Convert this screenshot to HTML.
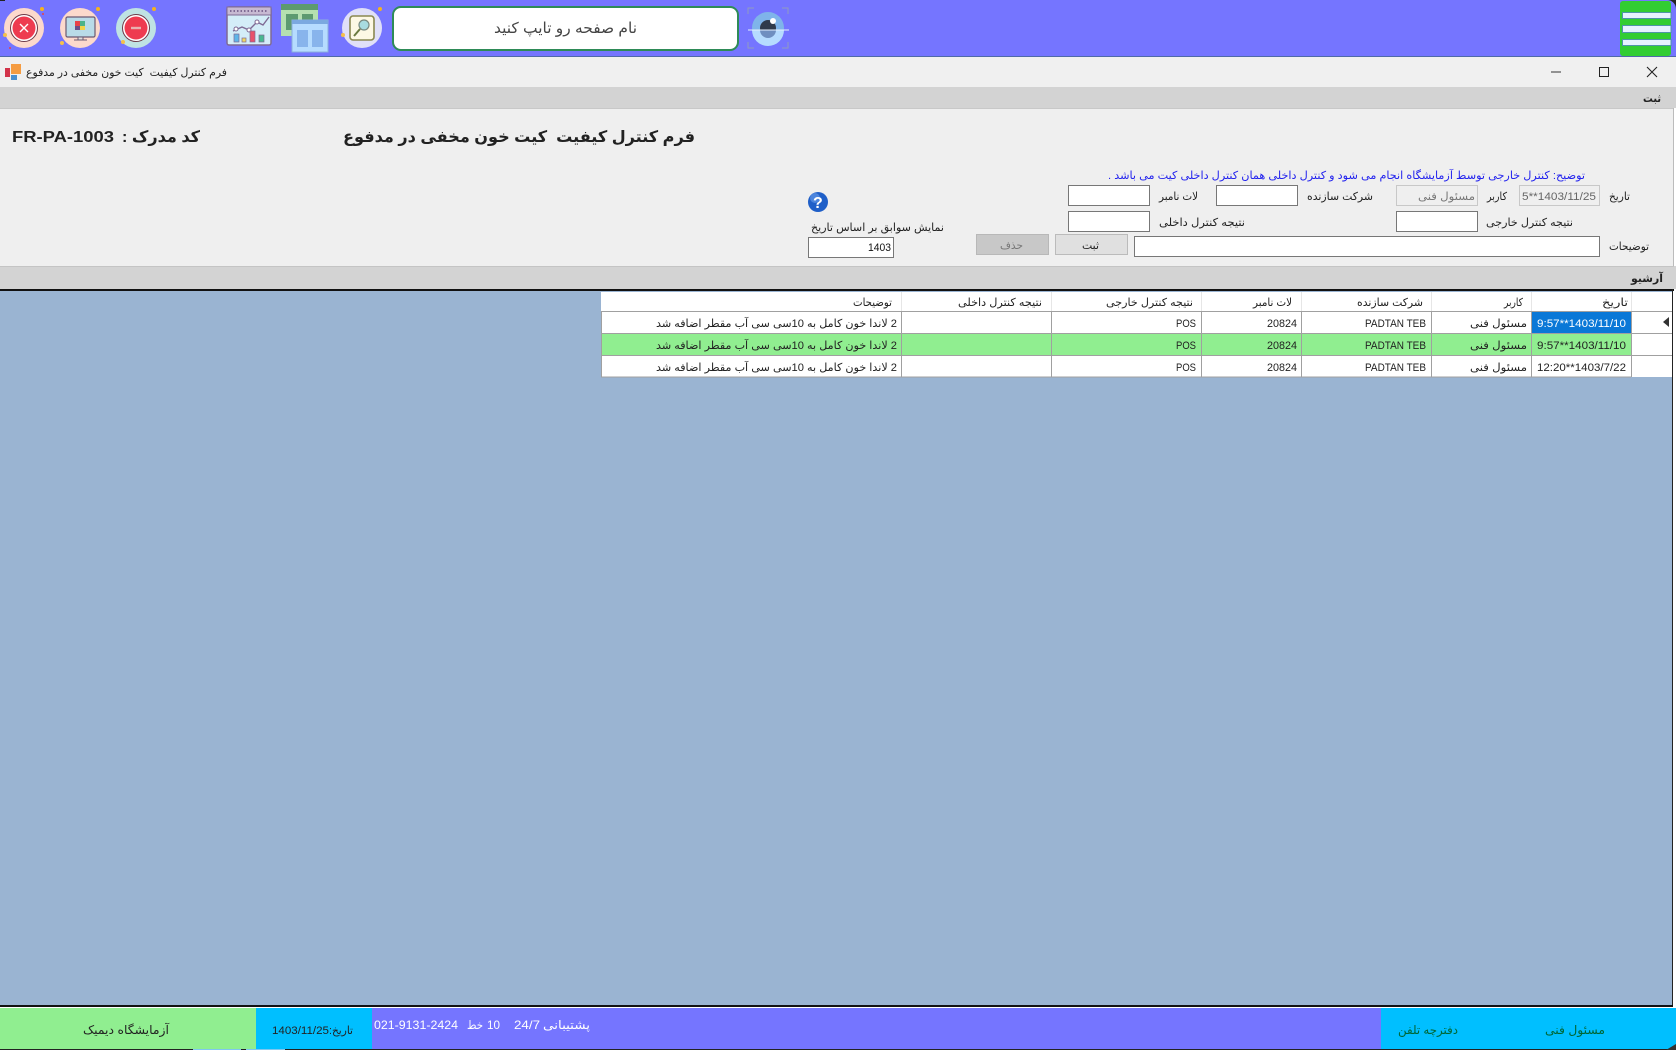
<!DOCTYPE html>
<html lang="fa"><head><meta charset="utf-8"><title>فرم کنترل کیفیت</title>
<style>
html,body{margin:0;padding:0;background:#fff;width:1676px;height:1050px;overflow:hidden}
svg{display:block;position:absolute;left:0;top:0}
text{font-family:"Liberation Sans","DejaVu Sans",sans-serif;font-size:11px;fill:#222;direction:rtl;unicode-bidi:plaintext;white-space:pre}
.b{font-weight:bold;font-size:16px;fill:#222}
</style></head><body>
<svg width="1676" height="1050" viewBox="0 0 1676 1050" xmlns="http://www.w3.org/2000/svg">
<!-- top bar -->
<rect x="0" y="0" width="1676" height="56" fill="#7575ff"/>
<rect x="0" y="0" width="5" height="1" fill="#222"/>
<rect x="0" y="56" width="1676" height="1" fill="#4f6aa8"/>
<!-- title bar -->
<rect x="0" y="57" width="1676" height="30" fill="#f0f0f0"/>
<rect x="5" y="68" width="5" height="9" fill="#d2334a"/>
<rect x="11" y="64" width="10" height="10" fill="#f59c42"/>
<rect x="11" y="75" width="6" height="5" fill="#4a8fd0"/>
<text x="227" y="76" textLength="201" lengthAdjust="spacingAndGlyphs">فرم کنترل کیفیت  کیت خون مخفی در مدفوع</text>
<path d="M1551 72h10" stroke="#333" stroke-width="1"/>
<rect x="1599.5" y="67.5" width="9" height="9" fill="none" stroke="#222"/>
<path d="M1647 67l10 10M1657 67l-10 10" stroke="#222" stroke-width="1.1"/>
<!-- form -->
<rect x="0" y="87" width="1676" height="21" fill="#d3d3d3"/>
<rect x="0" y="108" width="1674" height="158" fill="#efefef"/>
<rect x="0" y="108" width="1674" height="1" fill="#c8c8c8"/>
<rect x="1673" y="108" width="1" height="158" fill="#bbb"/>
<text x="1661" y="102" textLength="18" lengthAdjust="spacingAndGlyphs" style="font-weight:bold">ثبت</text>
<text class="b" x="695" y="142" textLength="352" lengthAdjust="spacingAndGlyphs">فرم کنترل کیفیت  کیت خون مخفی در مدفوع</text>
<text class="b" x="200" y="142" textLength="78" lengthAdjust="spacingAndGlyphs">کد مدرک :</text>
<text class="b" x="12" y="142" textLength="102" lengthAdjust="spacingAndGlyphs" style="direction:ltr">FR-PA-1003</text>
<text x="1585" y="179" textLength="477" lengthAdjust="spacingAndGlyphs" style="fill:#2222ee">توضیح: کنترل خارجی توسط آزمایشگاه انجام می شود و کنترل داخلی همان کنترل داخلی کیت می باشد .</text>
<!-- inputs -->
<g fill="#fff" stroke="#777" stroke-width="1">
<rect x="1068.5" y="185.5" width="81" height="20"/>
<rect x="1216.5" y="185.5" width="81" height="20"/>
<rect x="1068.5" y="211.5" width="81" height="20"/>
<rect x="1396.5" y="211.5" width="81" height="20"/>
<rect x="1134.5" y="236.5" width="465" height="20"/>
<rect x="808.5" y="237.5" width="85" height="20"/>
</g>
<g fill="#efefef" stroke="#c8c8c8" stroke-width="1">
<rect x="1396.5" y="185.5" width="81" height="20"/>
<rect x="1519.5" y="185.5" width="80" height="20"/>
</g>
<text x="1522" y="200" textLength="74" lengthAdjust="spacingAndGlyphs" style="fill:#666;direction:ltr">5**1403/11/25</text>
<text x="1475" y="200" textLength="57" lengthAdjust="spacingAndGlyphs" style="fill:#777">مسئول فنی</text>
<text x="868" y="251" textLength="23" lengthAdjust="spacingAndGlyphs" style="direction:ltr;fill:#111">1403</text>
<text x="1630" y="200" textLength="21" lengthAdjust="spacingAndGlyphs">تاریخ</text>
<text x="1507" y="200" textLength="20" lengthAdjust="spacingAndGlyphs">کاربر</text>
<text x="1373" y="200" textLength="66" lengthAdjust="spacingAndGlyphs">شرکت سازنده</text>
<text x="1198" y="200" textLength="39" lengthAdjust="spacingAndGlyphs">لات نامبر</text>
<text x="1245" y="226" textLength="86" lengthAdjust="spacingAndGlyphs">نتیجه کنترل داخلی</text>
<text x="1573" y="226" textLength="87" lengthAdjust="spacingAndGlyphs">نتیجه کنترل خارجی</text>
<text x="1649" y="250" textLength="40" lengthAdjust="spacingAndGlyphs">توضیحات</text>
<text x="944" y="231" textLength="133" lengthAdjust="spacingAndGlyphs">نمایش سوابق بر اساس تاریخ</text>
<!-- buttons -->
<rect x="976.5" y="234.5" width="72" height="20" fill="#c8c8c8" stroke="#b8b8b8"/>
<rect x="1055.5" y="234.5" width="72" height="20" fill="#e0e0e0" stroke="#bbb"/>
<text x="1023" y="249" textLength="23" lengthAdjust="spacingAndGlyphs" style="fill:#777">حذف</text>
<text x="1099" y="249" textLength="17" lengthAdjust="spacingAndGlyphs">ثبت</text>
<!-- help -->
<circle cx="818" cy="202" r="10" fill="#1f5fc8"/>
<circle cx="815" cy="198" r="5" fill="#5f96e6" opacity=".7"/>
<text x="813" y="208" style="font-size:16px;font-weight:bold;fill:#fff;direction:ltr">?</text>
<!-- archive -->
<rect x="0" y="266" width="1676" height="23" fill="#d3d3d3"/>
<rect x="0" y="266" width="1674" height="1" fill="#c4c4c4"/>
<text x="1663" y="282" textLength="32" lengthAdjust="spacingAndGlyphs" style="font-weight:bold">آرشیو</text>
<rect x="0" y="289" width="1674" height="716" fill="#9ab4d2"/>
<rect x="0" y="289" width="1674" height="2" fill="#111"/>
<rect x="1672" y="289" width="1" height="716" fill="#222"/>
<rect x="0" y="1005" width="1674" height="2" fill="#111"/>
<rect x="1673" y="291" width="1" height="716" fill="#fff"/>
<!-- grid -->
<rect x="601" y="292" width="1071" height="19" fill="#fff"/>
<rect x="601" y="311" width="1071" height="22" fill="#fff"/>
<rect x="601" y="333" width="1030" height="22" fill="#90ee90"/>
<rect x="1631" y="333" width="41" height="22" fill="#fff"/>
<rect x="601" y="355" width="1071" height="22" fill="#fff"/>
<rect x="1531" y="311" width="100" height="22" fill="#0a78d7"/>
<g stroke="#a0a0a0" stroke-width="1" fill="none">
<path d="M601 311.5H1672M601 333.5H1672M601 355.5H1672M601 377H1631"/>
<path d="M601.5 311V377M901.5 311V377M1051.5 311V377M1201.5 311V377M1301.5 311V377M1431.5 311V377M1531.5 311V377M1631.5 311V377"/>
</g>
<g stroke="#e6e6e6" stroke-width="1"><path d="M901.5 292V311M1051.5 292V311M1201.5 292V311M1301.5 292V311M1431.5 292V311M1531.5 292V311M1631.5 292V311"/></g>
<path d="M1669 317v10l-6-5z" fill="#333"/>
<g style="fill:#111">
<text x="1628" y="306" textLength="26" lengthAdjust="spacingAndGlyphs">تاریخ</text>
<text x="1523" y="306" textLength="19" lengthAdjust="spacingAndGlyphs">کاربر</text>
<text x="1423" y="306" textLength="66" lengthAdjust="spacingAndGlyphs">شرکت سازنده</text>
<text x="1292" y="306" textLength="39" lengthAdjust="spacingAndGlyphs">لات نامبر</text>
<text x="1193" y="306" textLength="87" lengthAdjust="spacingAndGlyphs">نتیجه کنترل خارجی</text>
<text x="1042" y="306" textLength="84" lengthAdjust="spacingAndGlyphs">نتیجه کنترل داخلی</text>
<text x="892" y="306" textLength="39" lengthAdjust="spacingAndGlyphs">توضیحات</text>
</g>
<text x="1537" y="327" textLength="89" lengthAdjust="spacingAndGlyphs" style="direction:ltr;fill:#fff">9:57**1403/11/10</text>
<text x="1537" y="349" textLength="89" lengthAdjust="spacingAndGlyphs" style="direction:ltr">9:57**1403/11/10</text>
<text x="1537" y="371" textLength="89" lengthAdjust="spacingAndGlyphs" style="direction:ltr">12:20**1403/7/22</text>
<text x="1527" y="327" textLength="57" lengthAdjust="spacingAndGlyphs">مسئول فنی</text>
<text x="1527" y="349" textLength="57" lengthAdjust="spacingAndGlyphs">مسئول فنی</text>
<text x="1527" y="371" textLength="57" lengthAdjust="spacingAndGlyphs">مسئول فنی</text>
<text x="1365" y="327" textLength="61" lengthAdjust="spacingAndGlyphs" style="direction:ltr">PADTAN TEB</text>
<text x="1365" y="349" textLength="61" lengthAdjust="spacingAndGlyphs" style="direction:ltr">PADTAN TEB</text>
<text x="1365" y="371" textLength="61" lengthAdjust="spacingAndGlyphs" style="direction:ltr">PADTAN TEB</text>
<text x="1267" y="327" textLength="30" lengthAdjust="spacingAndGlyphs" style="direction:ltr">20824</text>
<text x="1267" y="349" textLength="30" lengthAdjust="spacingAndGlyphs" style="direction:ltr">20824</text>
<text x="1267" y="371" textLength="30" lengthAdjust="spacingAndGlyphs" style="direction:ltr">20824</text>
<text x="1176" y="327" textLength="20" lengthAdjust="spacingAndGlyphs" style="direction:ltr">POS</text>
<text x="1176" y="349" textLength="20" lengthAdjust="spacingAndGlyphs" style="direction:ltr">POS</text>
<text x="1176" y="371" textLength="20" lengthAdjust="spacingAndGlyphs" style="direction:ltr">POS</text>
<text x="897" y="327" textLength="241" lengthAdjust="spacingAndGlyphs">2 لاندا خون کامل به 10سی سی آب مقطر اضافه شد</text>
<text x="897" y="349" textLength="241" lengthAdjust="spacingAndGlyphs">2 لاندا خون کامل به 10سی سی آب مقطر اضافه شد</text>
<text x="897" y="371" textLength="241" lengthAdjust="spacingAndGlyphs">2 لاندا خون کامل به 10سی سی آب مقطر اضافه شد</text>
<!-- status bar -->
<rect x="0" y="1008" width="1676" height="41" fill="#7575ff"/>
<rect x="0" y="1008" width="256" height="41" fill="#90ee90"/>
<rect x="256" y="1008" width="116" height="41" fill="#00bfff"/>
<rect x="1381" y="1008" width="295" height="41" fill="#00bfff"/>
<rect x="0" y="1049" width="1676" height="1" fill="#222"/>
<rect x="193" y="1049" width="48" height="1" fill="#7fc8f0"/>
<rect x="246" y="1049" width="39" height="1" fill="#7fc8f0"/>
<path d="M1676 1044v6h-10z" fill="#333"/>
<text x="169" y="1034" textLength="86" lengthAdjust="spacingAndGlyphs" style="font-size:12px">آزمایشگاه دیمیک</text>
<text x="353" y="1034" textLength="24" lengthAdjust="spacingAndGlyphs">تاریخ:</text>
<text x="272" y="1034" textLength="57" lengthAdjust="spacingAndGlyphs" style="direction:ltr">1403/11/25</text>
<text x="590" y="1029" textLength="47" lengthAdjust="spacingAndGlyphs" style="fill:#fff;font-size:12px">پشتیبانی</text>
<text x="514" y="1029" textLength="26" lengthAdjust="spacingAndGlyphs" style="fill:#fff;font-size:12px;direction:ltr">24/7</text>
<text x="487" y="1029" textLength="13" lengthAdjust="spacingAndGlyphs" style="fill:#fff;font-size:12px;direction:ltr">10</text>
<text x="483" y="1029" textLength="16" lengthAdjust="spacingAndGlyphs" style="fill:#fff;font-size:12px">خط</text>
<text x="374" y="1029" textLength="84" lengthAdjust="spacingAndGlyphs" style="fill:#fff;font-size:12px;direction:ltr">021-9131-2424</text>
<text x="1458" y="1034" textLength="60" lengthAdjust="spacingAndGlyphs" style="font-size:12px;fill:#063">دفترچه تلفن</text>
<text x="1605" y="1034" textLength="60" lengthAdjust="spacingAndGlyphs" style="font-size:12px;fill:#063">مسئول فنی</text>
<!-- search box -->
<rect x="393" y="7" width="345" height="43" rx="8" fill="#fff" stroke="#2e8b57" stroke-width="2"/>
<text x="637" y="33" textLength="143" lengthAdjust="spacingAndGlyphs" style="font-size:15px;fill:#444">نام صفحه رو تایپ کنید</text>
<!-- icon: close -->
<circle cx="24" cy="28" r="20" fill="#fcd9cc"/>
<circle cx="24" cy="28" r="13.5" fill="#fff" stroke="#6d3a48" stroke-width="1"/>
<circle cx="24" cy="28" r="11.5" fill="#ee3b50"/>
<path d="M20 24l8 8M28 24l-8 8" stroke="#fff" stroke-width="1.4"/>
<circle cx="42" cy="9" r="2" fill="#f5b31e"/><circle cx="5" cy="35" r="2" fill="#f5c04a"/><circle cx="10" cy="48" r="1" fill="#e8434a"/><circle cx="43" cy="14" r="1" fill="#e8434a"/>
<!-- icon: monitor -->
<circle cx="80" cy="28" r="20" fill="#fcd9cc"/>
<rect x="66" y="17" width="29" height="20" rx="1.5" fill="#b9dbe8" stroke="#6b5a72" stroke-width="1.2"/>
<rect x="75" y="21" width="5" height="5" fill="#e8434a"/><rect x="80" y="21" width="5" height="5" fill="#4cb38a"/>
<rect x="75" y="26" width="5" height="4" fill="#6a4f8a"/><rect x="80" y="26" width="5" height="4" fill="#f2d34a"/>
<path d="M78 37h5v3h-5zM74 40h13" fill="#ddd" stroke="#6b5a72"/>
<circle cx="98" cy="9" r="2" fill="#f5b31e"/><circle cx="62" cy="43" r="2" fill="#f5c04a"/>
<!-- icon: minus -->
<circle cx="136" cy="28" r="20" fill="#bfe3e3"/>
<circle cx="136" cy="28" r="13.5" fill="#fff" stroke="#6d3a48" stroke-width="1"/>
<circle cx="136" cy="28" r="11.5" fill="#ee3b50"/>
<path d="M131 28h10" stroke="#e8b0b0" stroke-width="2.4"/>
<circle cx="154" cy="9" r="2" fill="#f5b31e"/><circle cx="123" cy="42" r="2" fill="#f5c04a"/>
<!-- icon: chart -->
<rect x="227" y="7" width="44" height="38" rx="2" fill="#d4edf8" stroke="#7f6a94" stroke-width="1.5"/>
<rect x="227" y="7" width="44" height="8" fill="#c7b9d2" stroke="#7f6a94"/>
<path d="M230 11h38" stroke="#7f6a94" stroke-width="2" stroke-dasharray="1.5 2"/>
<path d="M233 31l9-4 7 3 8-8 6 3 6-8" fill="none" stroke="#7f6a94" stroke-width="1.4"/>
<circle cx="236" cy="29" r="2" fill="#fff" stroke="#7f6a94"/><circle cx="249" cy="30" r="2" fill="#fff" stroke="#7f6a94"/><circle cx="257" cy="22" r="2" fill="#fff" stroke="#7f6a94"/>
<rect x="234" y="34" width="5" height="8" fill="#5fb5e8" stroke="#7f6a94" stroke-width=".7"/>
<rect x="242" y="38" width="4" height="4" fill="#f0d860" stroke="#7f6a94" stroke-width=".7"/>
<rect x="250" y="31" width="5" height="11" fill="#e8506a" stroke="#7f6a94" stroke-width=".7"/>
<rect x="259" y="35" width="5" height="7" fill="#48b890" stroke="#7f6a94" stroke-width=".7"/>
<!-- icon: windows -->
<rect x="281" y="4" width="37" height="32" fill="#b5dfb0"/>
<rect x="281" y="4" width="37" height="6" fill="#5d9a70"/>
<rect x="286" y="14" width="12" height="16" fill="#5d9a70"/><rect x="302" y="14" width="11" height="16" fill="#5d9a70"/>
<rect x="292" y="20" width="36" height="32" fill="#b6dcff" stroke="#8ab0dc"/>
<rect x="292" y="20" width="36" height="4" fill="#7ba9e0"/>
<rect x="297" y="30" width="11" height="17" fill="#88b4ec"/><rect x="312" y="30" width="11" height="17" fill="#88b4ec"/>
<!-- icon: magnifier -->
<circle cx="362" cy="28" r="20" fill="#e0e0f8"/>
<rect x="350" y="16" width="24" height="24" rx="3" fill="#fdf8e4" stroke="#8a8850" stroke-width="1.6"/>
<circle cx="364" cy="25" r="5" fill="#a8dce0" stroke="#7a8a80" stroke-width="1.2"/>
<path d="M360 29l-6 7" stroke="#6a7a40" stroke-width="2"/>
<circle cx="380" cy="9" r="2" fill="#f5b31e"/><circle cx="343" cy="35" r="2" fill="#f5c04a"/>
<!-- icon: eye -->
<path d="M748 14v-6h6M782 8h6v6M748 42v6h6M782 48h6v-6" fill="none" stroke="#8f9ac0" stroke-width="1"/>
<circle cx="768" cy="28" r="16" fill="#7fb4ea"/>
<path d="M752 30h32a16 16 0 0 1-32 0z" fill="#b6dcff"/>
<circle cx="768" cy="28" r="8" fill="#2f3a4c"/>
<path d="M760 30h16a8 8 0 0 1-16 0z" fill="#6f8fc0"/>
<circle cx="773" cy="21" r="3" fill="#fff"/>
<rect x="748" y="29.5" width="41" height="1" fill="#e4f1ff"/>
<!-- hamburger -->
<rect x="1620" y="1" width="51" height="55" rx="3" fill="#32cd32"/>
<rect x="1622.5" y="12.5" width="48.5" height="6" fill="#e6f2ff" stroke="#4f94a8"/>
<rect x="1622.5" y="25.5" width="48.5" height="7" fill="#e6f2ff" stroke="#4f94a8"/>
<rect x="1622.5" y="39.5" width="48.5" height="6" fill="#e6f2ff" stroke="#4f94a8"/>
<path d="M1667 0h9v9a9 9 0 0 0-9-9z" fill="#222"/>
</svg>
</body></html>
